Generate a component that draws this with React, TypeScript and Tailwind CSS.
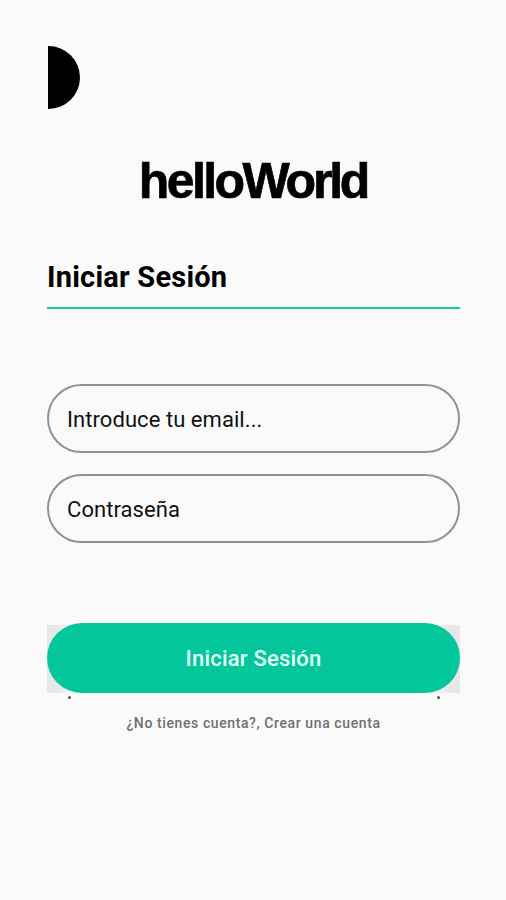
export default function App() {
  return (
    <main className="flex h-[900px] w-full flex-col bg-[#fafafa] pr-[46px] pl-[47px] pt-[46px] font-['Roboto',sans-serif] text-black">
      <div className="ml-px h-[63px] w-8 rounded-r-full bg-black" />
      <h1 className="mt-[44px] -ml-px text-center font-['Liberation_Sans',sans-serif] text-[50px] leading-[56px] font-bold whitespace-nowrap [-webkit-text-stroke:0.7px_black]">
        <span className="tracking-[-2.6px]">hello</span>
        <span className="tracking-[-3.2px]">World</span>
      </h1>
      <h2 className="mt-[49px] h-[51px] border-b-2 border-[#1ccba4] text-[29px] leading-[39px] font-bold tracking-[0.22px] whitespace-nowrap">Iniciar Sesión</h2>
      <form className="mt-[75px] flex flex-col">
        <input aria-label="Email" placeholder="Introduce tu email..." className="h-[69px] rounded-full border-2 border-[#929292] px-[18px] pt-[2px] text-[22px] tracking-[0.06px] placeholder:text-[#111]" />
        <input aria-label="Contraseña" type="password" placeholder="Contraseña" className="mt-[21px] h-[69px] rounded-full border-2 border-[#929292] px-[18px] pt-[2px] text-[22px] tracking-[0.06px] placeholder:text-[#111]" />
        <div className="relative mt-[80px] h-[70px]">
          <div className="absolute top-[2px] bottom-0 left-0 w-[30px] bg-linear-to-r from-[#e7e7e7] from-30% to-[#f7f7f7]" />
          <div className="absolute top-[2px] right-0 bottom-0 w-[30px] bg-linear-to-l from-[#e7e7e7] from-30% to-[#f7f7f7]" />
          <button type="button" className="relative h-full w-full rounded-full bg-[#03c69a] text-[22px] font-medium tracking-[0.2px] text-[#e4fff8]">Iniciar Sesión</button>
          <span className="absolute top-[73px] left-[21px] size-[3px] rounded-full bg-[#555]" />
          <span className="absolute top-[73px] right-[20px] size-[3px] rounded-full bg-[#555]" />
        </div>
      </form>
      <p className="mt-[20px] text-center text-[14px] leading-[20px] font-medium tracking-[0.6px] text-[#707070]">¿No tienes cuenta?, Crear una cuenta</p>
    </main>
  );
}
